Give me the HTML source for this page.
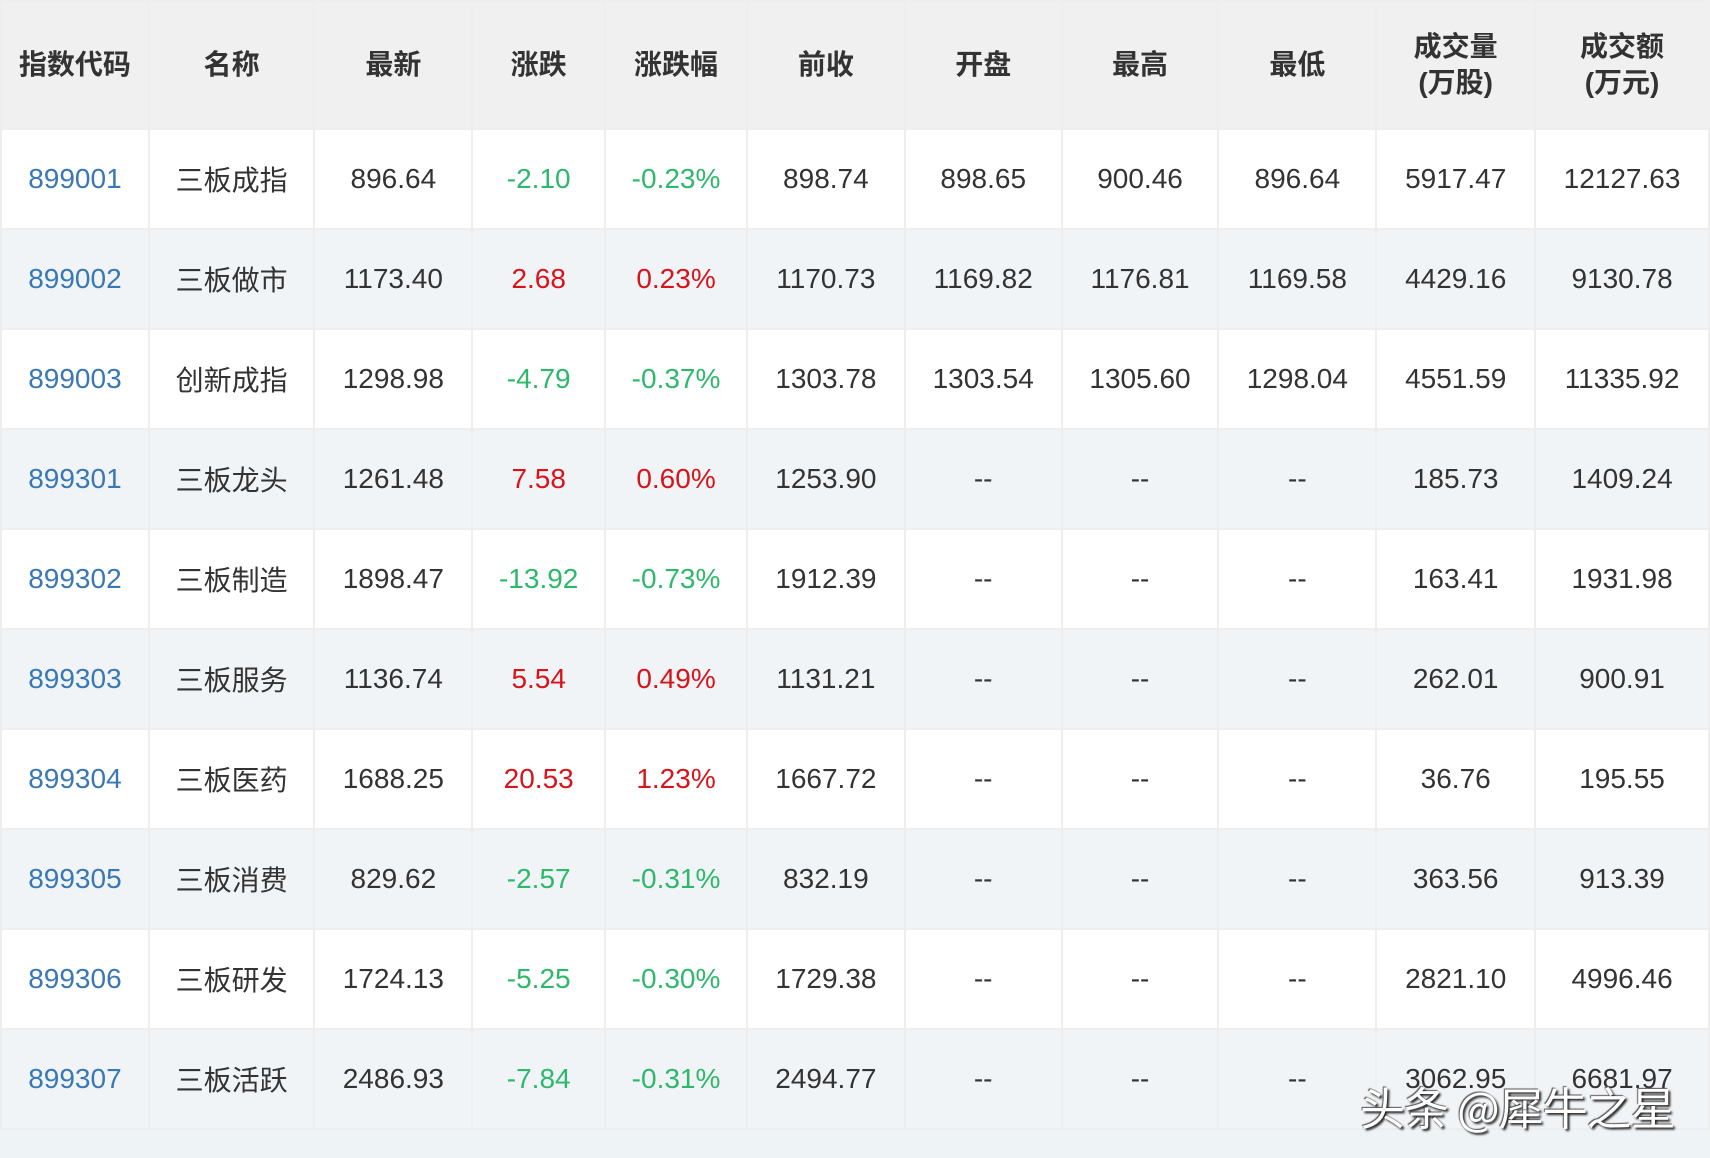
<!DOCTYPE html>
<html><head><meta charset="utf-8"><style>
body{margin:0;width:1710px;height:1158px;background:#eef3f6;overflow:hidden;font-family:"Liberation Sans","Noto Sans CJK SC",sans-serif;position:relative}
table{border-collapse:collapse;table-layout:fixed;position:absolute;left:0;top:0}
td,th{border:2px solid #eeeeee;text-align:center;padding:0;font-size:28px;color:#333}
th{background:#f0f0f0;height:126px;font-weight:bold;line-height:36px;color:#333}
td{height:98px}
tr.a td{background:#fff}
tr.b td{background:#f0f4f7}
td.c{color:#3a78b5}
.g{color:#2eb86b}.r{color:#d8141a}
.wm{position:absolute;left:1360px;top:1073px;font-size:45px;color:#fff;font-family:"Noto Sans CJK SC",sans-serif;text-shadow:2px 2px 2px #222,-1px -1px 1px #555;letter-spacing:-1px}
</style></head><body>
<table>
<colgroup><col style="width:148px"><col style="width:166px"><col style="width:158px"><col style="width:133px"><col style="width:142px"><col style="width:158px"><col style="width:157px"><col style="width:157px"><col style="width:158px"><col style="width:159px"><col style="width:174px"></colgroup>
<tr><th>指数代码</th><th>名称</th><th>最新</th><th>涨跌</th><th>涨跌幅</th><th>前收</th><th>开盘</th><th>最高</th><th>最低</th><th>成交量<br>(万股)</th><th>成交额<br>(万元)</th></tr>
<tr class="a"><td class="c">899001</td><td>三板成指</td><td>896.64</td><td class="g">-2.10</td><td class="g">-0.23%</td><td>898.74</td><td>898.65</td><td>900.46</td><td>896.64</td><td>5917.47</td><td>12127.63</td></tr>
<tr class="b"><td class="c">899002</td><td>三板做市</td><td>1173.40</td><td class="r">2.68</td><td class="r">0.23%</td><td>1170.73</td><td>1169.82</td><td>1176.81</td><td>1169.58</td><td>4429.16</td><td>9130.78</td></tr>
<tr class="a"><td class="c">899003</td><td>创新成指</td><td>1298.98</td><td class="g">-4.79</td><td class="g">-0.37%</td><td>1303.78</td><td>1303.54</td><td>1305.60</td><td>1298.04</td><td>4551.59</td><td>11335.92</td></tr>
<tr class="b"><td class="c">899301</td><td>三板龙头</td><td>1261.48</td><td class="r">7.58</td><td class="r">0.60%</td><td>1253.90</td><td>--</td><td>--</td><td>--</td><td>185.73</td><td>1409.24</td></tr>
<tr class="a"><td class="c">899302</td><td>三板制造</td><td>1898.47</td><td class="g">-13.92</td><td class="g">-0.73%</td><td>1912.39</td><td>--</td><td>--</td><td>--</td><td>163.41</td><td>1931.98</td></tr>
<tr class="b"><td class="c">899303</td><td>三板服务</td><td>1136.74</td><td class="r">5.54</td><td class="r">0.49%</td><td>1131.21</td><td>--</td><td>--</td><td>--</td><td>262.01</td><td>900.91</td></tr>
<tr class="a"><td class="c">899304</td><td>三板医药</td><td>1688.25</td><td class="r">20.53</td><td class="r">1.23%</td><td>1667.72</td><td>--</td><td>--</td><td>--</td><td>36.76</td><td>195.55</td></tr>
<tr class="b"><td class="c">899305</td><td>三板消费</td><td>829.62</td><td class="g">-2.57</td><td class="g">-0.31%</td><td>832.19</td><td>--</td><td>--</td><td>--</td><td>363.56</td><td>913.39</td></tr>
<tr class="a"><td class="c">899306</td><td>三板研发</td><td>1724.13</td><td class="g">-5.25</td><td class="g">-0.30%</td><td>1729.38</td><td>--</td><td>--</td><td>--</td><td>2821.10</td><td>4996.46</td></tr>
<tr class="b"><td class="c">899307</td><td>三板活跃</td><td>2486.93</td><td class="g">-7.84</td><td class="g">-0.31%</td><td>2494.77</td><td>--</td><td>--</td><td>--</td><td>3062.95</td><td>6681.97</td></tr>
</table>
<div class="wm">头条 @犀牛之星</div>
</body></html>
